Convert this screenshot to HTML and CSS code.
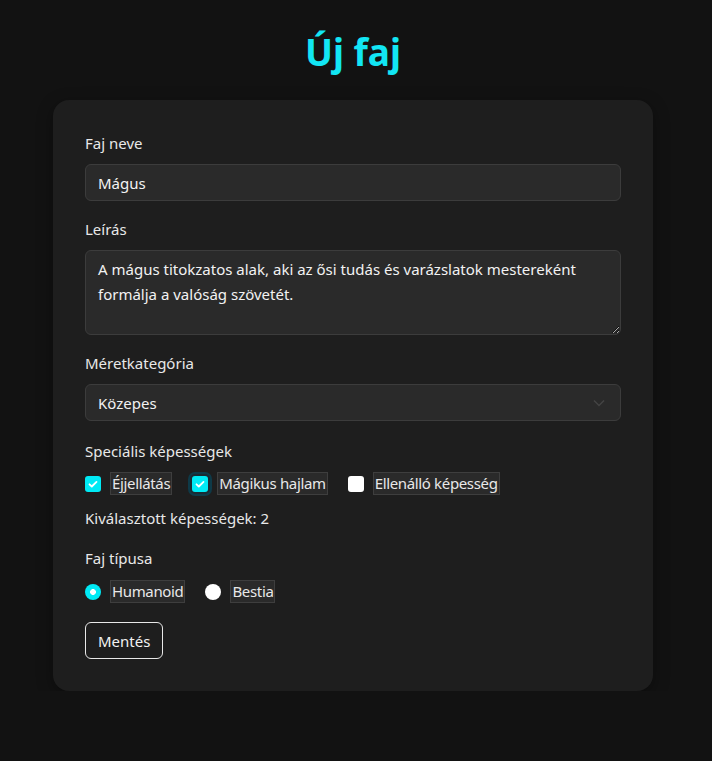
FILE: index.html
```html
<!DOCTYPE html>
<html lang="hu">
<head>
<meta charset="utf-8">
<title>Új faj</title>
<link rel="stylesheet" href="styles.css">
</head>
<body>
<div class="page">
  <h1 class="title">Új faj</h1>
  <form class="card">
    <div class="group">
      <label class="label" for="name">Faj neve</label>
      <input class="field" id="name" type="text" value="Mágus">
    </div>
    <div class="group">
      <label class="label" for="desc">Leírás</label>
      <textarea class="field area" id="desc">A mágus titokzatos alak, aki az ősi tudás és varázslatok mestereként formálja a valóság szövetét.</textarea>
    </div>
    <div class="group">
      <label class="label" for="size">Méretkategória</label>
      <select class="field select" id="size">
        <option>Közepes</option>
      </select>
    </div>
    <div class="label label-abil">Speciális képességek</div>
    <div class="row">
      <label class="opt"><input class="box" type="checkbox" checked><span class="chip">Éjjellátás</span></label>
      <label class="opt"><input class="box focus" type="checkbox" checked><span class="chip">Mágikus hajlam</span></label>
      <label class="opt"><input class="box" type="checkbox"><span class="chip">Ellenálló képesség</span></label>
    </div>
    <p class="count">Kiválasztott képességek: 2</p>
    <div class="label label-type">Faj típusa</div>
    <div class="row">
      <label class="opt"><input class="dot" type="radio" name="t" checked><span class="chip">Humanoid</span></label>
      <label class="opt"><input class="dot" type="radio" name="t"><span class="chip">Bestia</span></label>
    </div>
    <div class="actions">
      <button class="btn" type="button">Mentés</button>
    </div>
  </form>
</div>
</body>
</html>
```

FILE: styles.css
```css
html, body {
  margin: 0;
  padding: 0;
  background: #121212;
}
body {
  font-family: "Noto Sans", "Open Sans", sans-serif;
  font-size: 15px;
  color: #e8e8e8;
}
.page {
  width: 706px;
  padding-top: 28px;
}
.title {
  margin: 0 0 24px;
  text-align: center;
  font-size: 37px;
  line-height: 48px;
  font-weight: 700;
  color: #12e6f4;
}
.card {
  width: 536px;
  margin: 0 auto;
  padding: 32px;
  background: #1e1e1e;
  border-radius: 16px;
  box-shadow: 0 4px 16px rgba(0,0,0,0.35);
  display: flex;
  flex-direction: column;
}
.group {
  display: flex;
  flex-direction: column;
  margin-bottom: 17px;
}
.label {
  display: block;
  line-height: 22px;
  margin-bottom: 10px;
  color: #e8e8e8;
}
.field {
  box-sizing: border-box;
  width: 100%;
  height: 37px;
  padding: 0 12px;
  font: inherit;
  color: #f2f2f2;
  background: #2a2a2a;
  border: 1px solid #3c3c3c;
  border-radius: 6px;
  outline: none;
}
.area {
  height: 85px;
  padding: 6px 12px;
  line-height: 25px;
  resize: vertical;
}
.select {
  appearance: none;
  -webkit-appearance: none;
  background-image: url("data:image/svg+xml,%3Csvg xmlns='http://www.w3.org/2000/svg' width='12' height='8' viewBox='0 0 12 8'%3E%3Cpath d='M1 1.5l5 5 5-5' fill='none' stroke='%23444' stroke-width='1.5'/%3E%3C/svg%3E");
  background-repeat: no-repeat;
  background-position: right 15px center;
}
.label-abil {
  margin-top: 2px;
}
.row {
  display: flex;
  align-items: center;
  gap: 20px;
  height: 23px;
}
.opt {
  display: flex;
  align-items: center;
  gap: 9px;
}
.chip {
  display: inline-block;
  line-height: 21px;
  padding: 0 1px;
  letter-spacing: -0.35px;
  background: #2a2a2a;
  border: 1px solid #3e3e3e;
}
.box, .dot {
  appearance: none;
  -webkit-appearance: none;
  margin: 0;
  width: 16px;
  height: 16px;
  flex: none;
  background: #ffffff;
  border: none;
  border-radius: 3px;
  position: relative;
}
.box:checked {
  background: #00eaf5 url("data:image/svg+xml,%3Csvg xmlns='http://www.w3.org/2000/svg' width='16' height='16' viewBox='0 0 16 16'%3E%3Cpath d='M4.5 8.3l2.3 2.2 4.7-4.6' fill='none' stroke='%23fff' stroke-width='1.8' stroke-linecap='round' stroke-linejoin='round'/%3E%3C/svg%3E") no-repeat center;
}
.box.focus {
  box-shadow: 0 0 0 2px #1b2a33, 0 0 0 4px #0e3a48;
}
.dot {
  border-radius: 50%;
}
.dot:checked {
  background: radial-gradient(circle, #ffffff 0 2.6px, #00eaf5 3.2px);
}
.count {
  margin: 12px 0 18px;
  line-height: 22px;
}
.label-type {
  margin-bottom: 11px;
}
.actions {
  margin-top: 19px;
}
.btn {
  font: inherit;
  color: #f2f2f2;
  background: transparent;
  border: 1px solid #e8e8e8;
  border-radius: 6px;
  height: 37px;
  padding: 0 12px;
  cursor: pointer;
}
```
